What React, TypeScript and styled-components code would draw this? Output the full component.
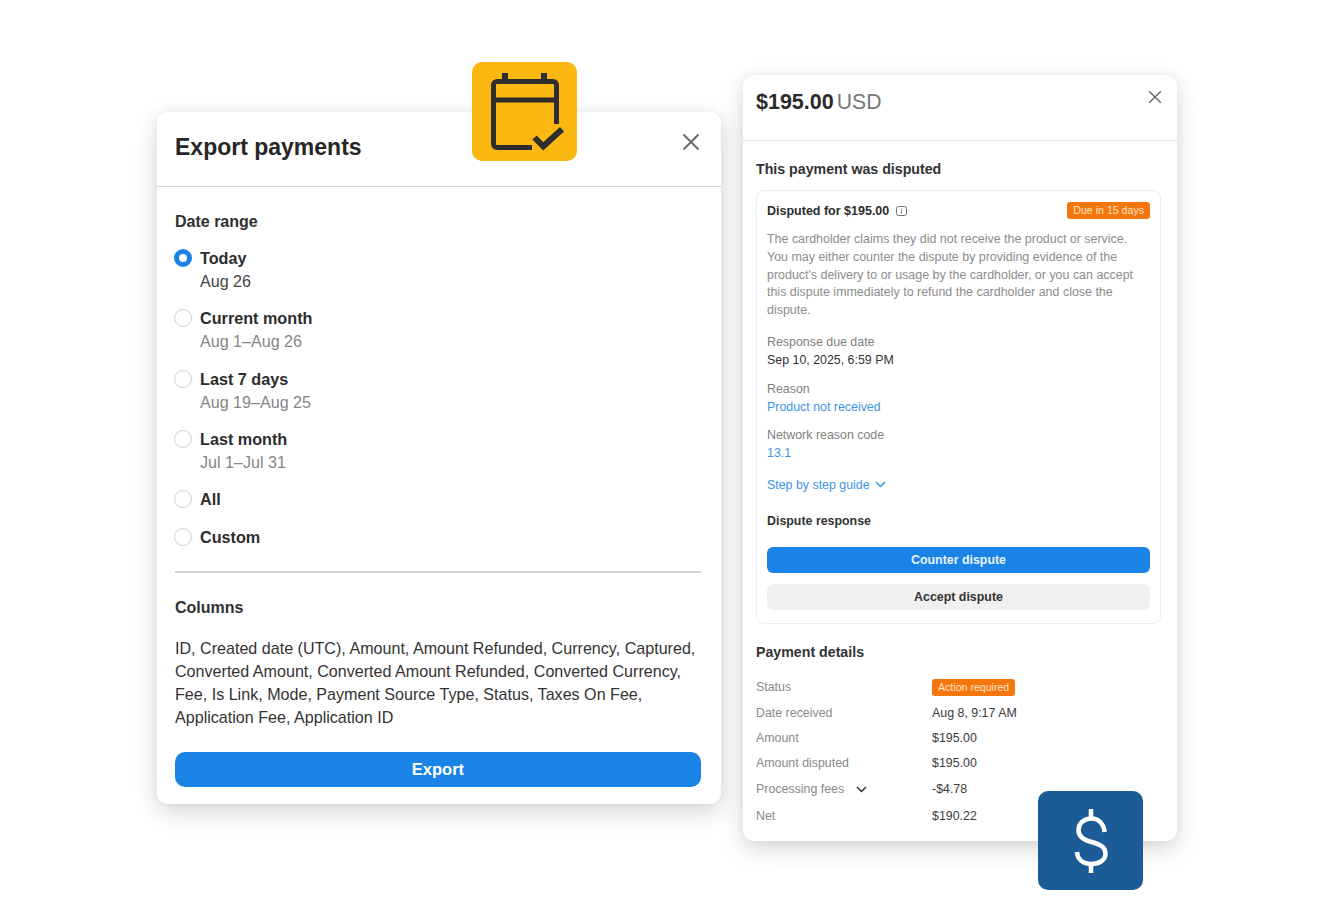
import React from "react";
import styled, { createGlobalStyle } from "styled-components";

const GlobalStyle = createGlobalStyle`
  html, body { margin: 0; padding: 0; background: #fff; }
  body { font-family: "Liberation Sans", Arial, sans-serif; color: #2b2b2b; }
`;

const Page = styled.div`
  width: 1334px;
  height: 917px;
  overflow: hidden;
  display: flex;
  align-items: flex-start;
  gap: 22px;
  padding-left: 157px;
  box-sizing: border-box;
`;

const Card = styled.div<{ $top: number; $width: number; $height: number }>`
  position: relative;
  flex: none;
  box-sizing: border-box;
  margin-top: ${(p) => p.$top}px;
  width: ${(p) => p.$width}px;
  height: ${(p) => p.$height}px;
  background: #fff;
  border-radius: 11px;
  box-shadow: 0 8px 24px rgba(0, 0, 0, 0.16), 0 0 10px rgba(0, 0, 0, 0.05);
`;

const IconTile = styled.div<{ $bg: string }>`
  position: absolute;
  width: 105px;
  height: 99px;
  border-radius: 10px;
  background: ${(p) => p.$bg};
  display: flex;
`;

const CalendarTile = styled(IconTile)`
  left: 315px;
  top: -50px;
`;

const DollarTile = styled(IconTile)`
  left: 295px;
  top: 716px;
`;

const CloseButton = styled.button<{ $right: number; $top: number }>`
  position: absolute;
  right: ${(p) => p.$right}px;
  top: ${(p) => p.$top}px;
  padding: 0;
  border: 0;
  background: none;
  display: flex;
`;

const ExportHeader = styled.div`
  height: 75px;
  box-sizing: border-box;
  padding: 20px 18px 0;
  border-bottom: 1.5px solid #d2d2d2;
`;

const ExportTitle = styled.div`
  font-size: 23px;
  line-height: 30px;
  font-weight: 700;
  color: #262626;
`;

const ExportBody = styled.div`
  padding: 25px 20px 0 18px;
`;

const SectionLabel = styled.div`
  font-size: 16px;
  line-height: 20px;
  font-weight: 700;
  color: #303030;
`;

const RadioList = styled.div`
  margin-top: 15px;
  display: flex;
  flex-direction: column;
`;

const RadioRow = styled.div<{ $height: number }>`
  display: flex;
  gap: 8px;
  height: ${(p) => p.$height}px;
`;

const Radio = styled.span<{ $on?: boolean }>`
  flex: none;
  box-sizing: border-box;
  width: 18px;
  height: 18px;
  margin: 2px 0 0 -1px;
  border-radius: 50%;
  background: #fff;
  border: ${(p) => (p.$on ? "5px solid #1a84e6" : "1.5px solid #d0d0d0")};
`;

const RadioText = styled.div`
  display: flex;
  flex-direction: column;
`;

const RadioName = styled.div`
  font-size: 16.2px;
  line-height: 22px;
  font-weight: 700;
  color: #2d2d2d;
`;

const RadioDate = styled.div<{ $dark?: boolean }>`
  font-size: 16.1px;
  line-height: 24px;
  color: ${(p) => (p.$dark ? "#444" : "#868686")};
`;

const Divider = styled.div`
  height: 1.5px;
  background: #d2d2d2;
  margin-top: 10px;
`;

const ColumnsLabel = styled(SectionLabel)`
  margin-top: 25px;
`;

const ColumnsText = styled.div`
  margin-top: 19px;
  font-size: 16.1px;
  line-height: 23px;
  color: #333;
`;

const ExportButton = styled.button`
  display: block;
  width: 100%;
  height: 35px;
  margin-top: 23px;
  border: 0;
  border-radius: 10px;
  background: #1a84e6;
  color: #fff;
  font: 700 16.5px "Liberation Sans", Arial, sans-serif;
`;

const DisputeHeader = styled.div`
  height: 66px;
  box-sizing: border-box;
  padding: 14px 13px 0;
  border-bottom: 1px solid #e8e8e8;
  display: flex;
  align-items: baseline;
  gap: 3px;
`;

const Amount = styled.span`
  font-size: 21.5px;
  line-height: 26px;
  font-weight: 700;
  color: #2b2b2b;
`;

const Currency = styled.span`
  font-size: 21.2px;
  line-height: 26px;
  color: #777;
`;

const DisputeBody = styled.div`
  padding: 19px 16px 0 13px;
`;

const SmallHeading = styled.div`
  font-size: 14.2px;
  line-height: 18px;
  font-weight: 700;
  color: #333;
`;

const DisputeBox = styled.div`
  margin-top: 12px;
  height: 434px;
  box-sizing: border-box;
  padding: 11px 10px 0 10px;
  border: 1px solid #ececec;
  border-radius: 8px;
`;

const BoxTop = styled.div`
  display: flex;
  align-items: center;
  justify-content: space-between;
  height: 18px;
`;

const BoxTitle = styled.div`
  display: flex;
  align-items: center;
  gap: 7px;
  font-size: 12.5px;
  font-weight: 700;
  color: #2d2d2d;
`;

const Badge = styled.span`
  display: inline-block;
  height: 17px;
  padding: 0 6px;
  border-radius: 3px;
  background: #f5760c;
  color: #ffe3c9;
  font-size: 10.6px;
  line-height: 16px;
`;

const DueBadge = styled(Badge)`
  margin-top: -1px;
`;

const Paragraph = styled.div`
  margin-top: 11px;
  font-size: 12.45px;
  line-height: 17.8px;
  color: #8c8c8c;
`;

const Field = styled.div<{ $top: number }>`
  margin-top: ${(p) => p.$top}px;
  font-size: 12.4px;
  line-height: 18px;
`;

const FieldLabel = styled.div`
  color: #808080;
`;

const FieldValue = styled.div`
  color: #333;
`;

const FieldLink = styled.div`
  color: #3c94e6;
`;

const GuideLink = styled(FieldLink)`
  margin-top: 14px;
  display: flex;
  align-items: center;
  gap: 5px;
  font-size: 12.4px;
  line-height: 18px;
`;

const BoxHeading = styled.div`
  margin-top: 18px;
  font-size: 12.4px;
  line-height: 18px;
  font-weight: 700;
  color: #333;
`;

const BoxButton = styled.button<{ $primary?: boolean }>`
  display: block;
  width: 100%;
  height: 26px;
  margin-top: ${(p) => (p.$primary ? 17 : 11)}px;
  border: 0;
  border-radius: 6px;
  background: ${(p) => (p.$primary ? "#1a84e6" : "#f0f0f0")};
  color: ${(p) => (p.$primary ? "#e8f3fd" : "#333")};
  font: 700 12.4px "Liberation Sans", Arial, sans-serif;
`;

const DetailsHeading = styled(SmallHeading)`
  margin-top: 19px;
`;

const DetailRows = styled.div`
  margin-top: 13px;
`;

const DetailRow = styled.div<{ $height: number }>`
  display: grid;
  grid-template-columns: 176px 1fr;
  align-items: center;
  height: ${(p) => p.$height}px;
  font-size: 12.4px;
`;

const DetailLabel = styled.div`
  display: flex;
  align-items: center;
  gap: 12px;
  color: #8a8a8a;
`;

const DetailValue = styled.div`
  color: #3a3a3a;
`;

const CloseIcon = ({ size, color }: { size: number; color: string }) => (
  <svg width={size} height={size} viewBox="0 0 18 18" fill="none" stroke={color} strokeWidth="1.8">
    <path d="M1.5 1.5l15 15M16.5 1.5l-15 15" />
  </svg>
);

const Chevron = ({ color }: { color: string }) => (
  <svg width="11" height="7" viewBox="0 0 11 7" fill="none" stroke={color} strokeWidth="1.5">
    <path d="M1 1l4.5 4.5L10 1" />
  </svg>
);

const dateRanges = [
  { name: "Today", date: "Aug 26", height: 60, on: true },
  { name: "Current month", date: "Aug 1–Aug 26", height: 61 },
  { name: "Last 7 days", date: "Aug 19–Aug 25", height: 60 },
  { name: "Last month", date: "Jul 1–Jul 31", height: 60 },
  { name: "All", height: 38 },
  { name: "Custom", height: 35 },
];

const details = [
  { label: "Amount", value: "$195.00", height: 24 },
  { label: "Amount disputed", value: "$195.00", height: 25 },
];

export default function App() {
  return (
    <>
      <GlobalStyle />
      <Page>
        <Card $top={112} $width={564} $height={692}>
          <CalendarTile $bg="#fbb810">
            <svg width="105" height="99" viewBox="0 0 105 99" fill="none" stroke="#2e2e2e" strokeWidth="5">
              <path d="M33 11v9M72 11v9" strokeWidth="6" />
              <path d="M60 85.5H25a3.5 3.5 0 0 1-3.5-3.5V23a3.5 3.5 0 0 1 3.5-3.5h56a3.5 3.5 0 0 1 3.5 3.5v39" />
              <path d="M21.5 38h63" />
              <path d="M62.5 75.5l8.8 8.8 18.7-17" strokeWidth="6" />
            </svg>
          </CalendarTile>
          <CloseButton $right={21} $top={21}>
            <CloseIcon size={18} color="#66666c" />
          </CloseButton>
          <ExportHeader>
            <ExportTitle>Export payments</ExportTitle>
          </ExportHeader>
          <ExportBody>
            <SectionLabel>Date range</SectionLabel>
            <RadioList>
              {dateRanges.map((r) => (
                <RadioRow key={r.name} $height={r.height}>
                  <Radio $on={r.on} />
                  <RadioText>
                    <RadioName>{r.name}</RadioName>
                    {r.date && <RadioDate $dark={r.on}>{r.date}</RadioDate>}
                  </RadioText>
                </RadioRow>
              ))}
            </RadioList>
            <Divider />
            <ColumnsLabel>Columns</ColumnsLabel>
            <ColumnsText>
              ID, Created date (UTC), Amount, Amount Refunded, Currency, Captured,
              <br />
              Converted Amount, Converted Amount Refunded, Converted Currency,
              <br />
              Fee, Is Link, Mode, Payment Source Type, Status, Taxes On Fee,
              <br />
              Application Fee, Application ID
            </ColumnsText>
            <ExportButton>Export</ExportButton>
          </ExportBody>
        </Card>

        <Card $top={75} $width={434} $height={766}>
          <DollarTile $bg="#1b5c96">
            <svg width="105" height="99" viewBox="0 0 105 99" fill="none" stroke="#fff" strokeWidth="4.5">
              <path d="M53 18v10M53 72v10" />
              <path d="M66.5 41c-.5-8-6-13.5-13-13.5-8 0-13 5-13 11.5 0 7 5 10 13 12 9 2.5 14 5 14 11.5 0 6.5-6 10.5-14 10.5-9 0-14-5-14.5-12" />
            </svg>
          </DollarTile>
          <CloseButton $right={15} $top={15}>
            <CloseIcon size={14} color="#66666c" />
          </CloseButton>
          <DisputeHeader>
            <Amount>$195.00</Amount>
            <Currency>USD</Currency>
          </DisputeHeader>
          <DisputeBody>
            <SmallHeading>This payment was disputed</SmallHeading>
            <DisputeBox>
              <BoxTop>
                <BoxTitle>
                  Disputed for $195.00
                  <svg width="11" height="10" viewBox="0 0 11 10" fill="none" stroke="#777" strokeWidth="1">
                    <rect x="0.5" y="0.5" width="10" height="9" rx="2" />
                    <path d="M5.5 2.5v1M5.5 4.5v3" />
                  </svg>
                </BoxTitle>
                <DueBadge>Due in 15 days</DueBadge>
              </BoxTop>
              <Paragraph>
                The cardholder claims they did not receive the product or service.
                <br />
                You may either counter the dispute by providing evidence of the
                <br />
                product's delivery to or usage by the cardholder, or you can accept
                <br />
                this dispute immediately to refund the cardholder and close the
                <br />
                dispute.
              </Paragraph>
              <Field $top={13}>
                <FieldLabel>Response due date</FieldLabel>
                <FieldValue>Sep 10, 2025, 6:59 PM</FieldValue>
              </Field>
              <Field $top={11}>
                <FieldLabel>Reason</FieldLabel>
                <FieldLink>Product not received</FieldLink>
              </Field>
              <Field $top={10}>
                <FieldLabel>Network reason code</FieldLabel>
                <FieldLink>13.1</FieldLink>
              </Field>
              <GuideLink>
                Step by step guide <Chevron color="#3c94e6" />
              </GuideLink>
              <BoxHeading>Dispute response</BoxHeading>
              <BoxButton $primary>Counter dispute</BoxButton>
              <BoxButton>Accept dispute</BoxButton>
            </DisputeBox>
            <DetailsHeading>Payment details</DetailsHeading>
            <DetailRows>
              <DetailRow $height={26}>
                <DetailLabel>Status</DetailLabel>
                <div>
                  <Badge>Action required</Badge>
                </div>
              </DetailRow>
              <DetailRow $height={26}>
                <DetailLabel>Date received</DetailLabel>
                <DetailValue>Aug 8, 9:17 AM</DetailValue>
              </DetailRow>
              {details.map((d) => (
                <DetailRow key={d.label} $height={d.height}>
                  <DetailLabel>{d.label}</DetailLabel>
                  <DetailValue>{d.value}</DetailValue>
                </DetailRow>
              ))}
              <DetailRow $height={28}>
                <DetailLabel>
                  Processing fees <Chevron color="#333" />
                </DetailLabel>
                <DetailValue>-$4.78</DetailValue>
              </DetailRow>
              <DetailRow $height={26}>
                <DetailLabel>Net</DetailLabel>
                <DetailValue>$190.22</DetailValue>
              </DetailRow>
            </DetailRows>
          </DisputeBody>
        </Card>
      </Page>
    </>
  );
}
